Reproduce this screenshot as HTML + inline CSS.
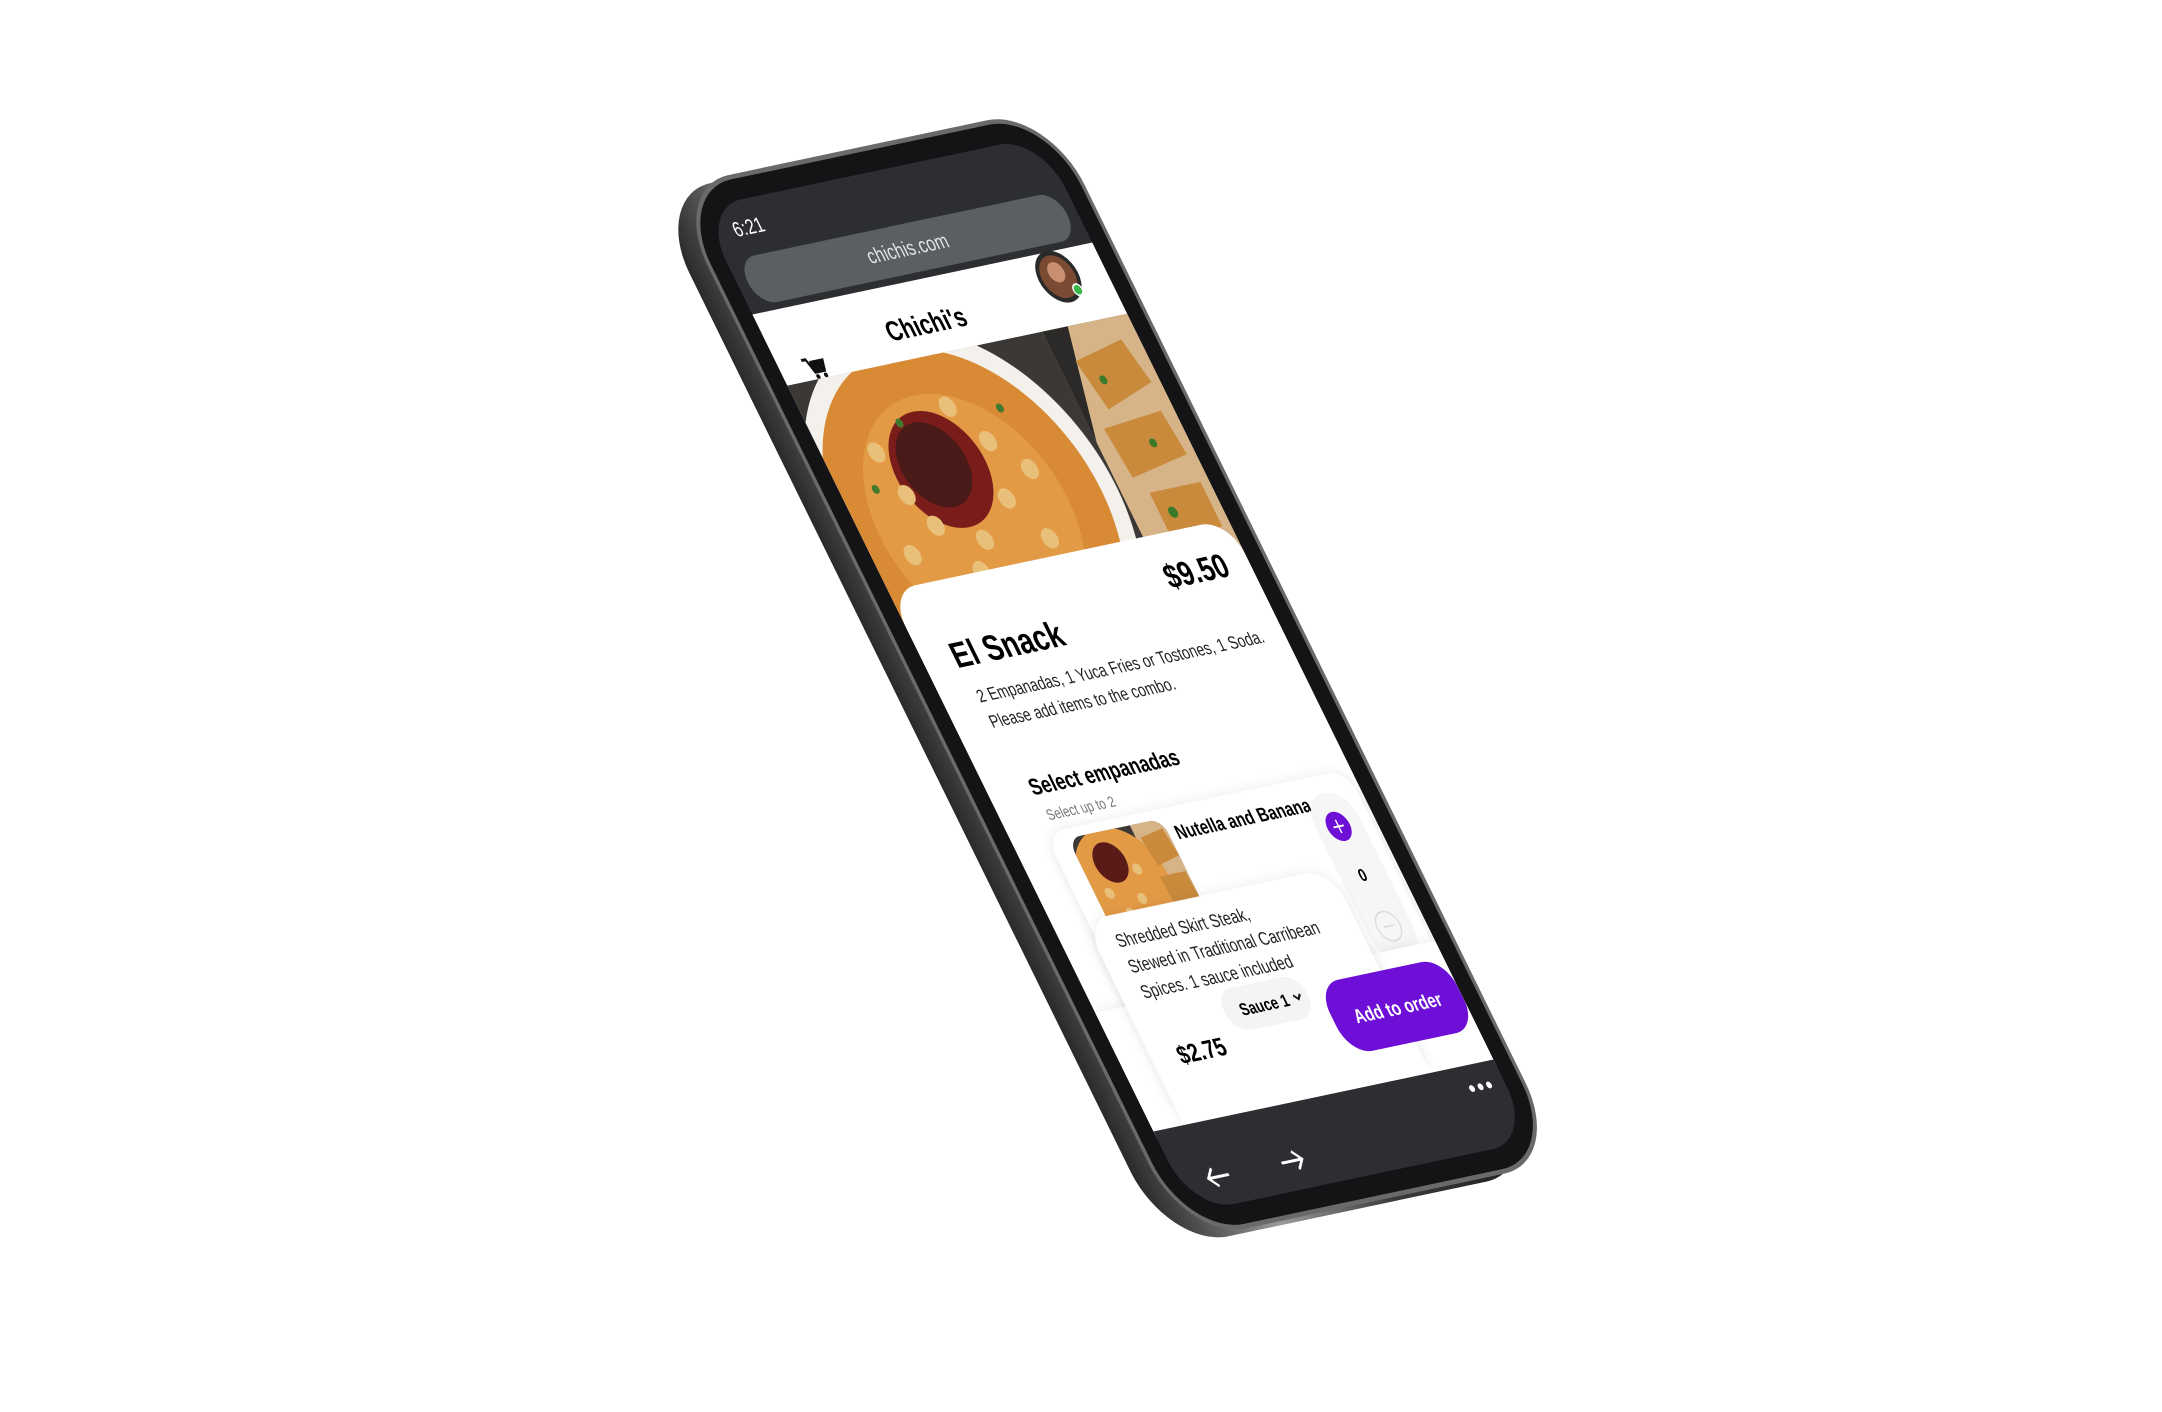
<!DOCTYPE html>
<html><head><meta charset="utf-8"><style>
html,body{margin:0;padding:0;background:#fff;width:2162px;height:1412px;overflow:hidden}
svg{display:block}
text{font-family:"Liberation Sans",sans-serif}
</style></head><body>
<svg width="2162" height="1412" viewBox="0 0 2162 1412">
<defs>
<linearGradient id="side" x1="0" y1="0" x2="1" y2="0">
<stop offset="0" stop-color="#2a2a2a"/><stop offset="0.3" stop-color="#9a9a9a"/><stop offset="0.6" stop-color="#3b3b3b"/><stop offset="1" stop-color="#1a1a1a"/>
</linearGradient>
<clipPath id="scr"><rect x="0" y="0" width="400" height="905" rx="48"/></clipPath>
<clipPath id="food"><rect x="0" y="160" width="400" height="230"/></clipPath>
<clipPath id="thumb"><rect x="62" y="578" width="110" height="85" rx="14"/></clipPath>
<filter id="sh" x="-20%" y="-20%" width="140%" height="140%"><feDropShadow dx="0" dy="2" stdDeviation="6" flood-color="#000" flood-opacity="0.12"/></filter>
</defs>
<g transform="translate(-18,8) matrix(0.85,-0.18,0.545,1.11,700,208)">
<rect x="-22" y="-22" width="444" height="949" rx="70" fill="url(#side)"/>
</g>
<g transform="matrix(0.85,-0.18,0.545,1.11,700,208)">
<rect x="-22" y="-22" width="444" height="949" rx="70" fill="#6a6a6a"/>
<rect x="-18" y="-18" width="436" height="941" rx="66" fill="#141416"/>
<g clip-path="url(#scr)">
<rect x="0" y="0" width="400" height="905" fill="#2c2e31"/>
<text x="24" y="30" fill="#fff" font-size="18">6:21</text>
<rect x="12" y="48" width="376" height="42" rx="21" fill="#5b5e62"/>
<text x="200" y="75" fill="#e4e4e4" font-size="18" text-anchor="middle">chichis.com</text>
<rect x="0" y="96" width="400" height="742" fill="#fff"/>
<circle cx="346" cy="118" r="23" fill="#2a2a2a"/>
<circle cx="346" cy="118" r="19" fill="#7a4a32"/>
<circle cx="346" cy="114" r="9" fill="#c89070"/>
<circle cx="360" cy="132" r="5" fill="#3bb54a" stroke="#fff" stroke-width="1.5"/>
<text x="180" y="142" font-size="24" font-weight="bold" text-anchor="middle">Chichi's</text>
<g transform="translate(28,140)" fill="#111">
<path d="M0 2h5l4 12h11l3-9H8" stroke="#111" stroke-width="2.5" fill="none"/>
<rect x="7" y="5" width="15" height="8"/>
<circle cx="10" cy="18" r="2.2"/><circle cx="19" cy="18" r="2.2"/>
</g>
<g clip-path="url(#food)">
<rect x="0" y="160" width="400" height="230" fill="#3b3836"/>
<rect x="300" y="160" width="120" height="230" fill="#d6b488"/>
<path d="M300 160 L330 160 L300 260 Z" fill="#2c2a29"/>
<g fill="#c98a3c">
<path d="M320 190 l60 -10 l10 40 l-60 15z"/><path d="M315 250 l70 -5 l5 40 l-70 10z"/><path d="M330 310 l60 0 l0 40 l-60 5z"/>
</g>
<g fill="#3a7a2a"><circle cx="340" cy="210" r="4"/><circle cx="360" cy="270" r="4"/><circle cx="345" cy="330" r="5"/></g>
<circle cx="130" cy="300" r="168" fill="#f4f1ec"/>
<circle cx="130" cy="300" r="150" fill="#d98a34"/>
<circle cx="130" cy="300" r="110" fill="#e39a45"/>
<circle cx="120" cy="255" r="52" fill="#7a1d1a"/>
<circle cx="115" cy="250" r="38" fill="#4a1a18"/>
<g fill="#e8c07a">
<circle cx="60" cy="230" r="9"/><circle cx="85" cy="300" r="9"/><circle cx="130" cy="320" r="9"/><circle cx="175" cy="290" r="9"/><circle cx="185" cy="240" r="9"/><circle cx="160" cy="205" r="9"/><circle cx="70" cy="270" r="9"/><circle cx="110" cy="345" r="9"/><circle cx="200" cy="330" r="9"/><circle cx="45" cy="320" r="9"/><circle cx="215" cy="270" r="9"/>
</g>
<g fill="#3f7a2d"><circle cx="100" cy="210" r="4"/><circle cx="150" cy="350" r="4"/><circle cx="215" cy="215" r="4"/><circle cx="40" cy="260" r="4"/></g>
</g>
<rect x="0" y="345" width="400" height="520" rx="32" fill="#fff"/>
<text x="375" y="392" font-size="29" font-weight="bold" text-anchor="end">$9.50</text>
<text x="34" y="420" font-size="31" font-weight="bold">El Snack</text>
<text x="40" y="452" font-size="15.5" fill="#222">2 Empanadas, 1 Yuca Fries or Tostones, 1 Soda.</text>
<text x="40" y="475" font-size="15.5" fill="#222">Please add items to the combo.</text>
<text x="48" y="537" font-size="20" font-weight="bold">Select empanadas</text>
<text x="52" y="560" font-size="13" fill="#777">Select up to 2</text>
<rect x="40" y="570" width="355" height="200" rx="22" fill="#fff" filter="url(#sh)"/>
<g clip-path="url(#thumb)">
<rect x="62" y="578" width="110" height="85" fill="#3b3836"/>
<rect x="135" y="578" width="40" height="85" fill="#d6b488"/>
<circle cx="100" cy="625" r="50" fill="#e39a45"/>
<circle cx="95" cy="605" r="18" fill="#5a1a18"/>
<g fill="#e8c07a"><circle cx="78" cy="630" r="5"/><circle cx="110" cy="640" r="5"/><circle cx="120" cy="615" r="5"/><circle cx="90" cy="650" r="5"/></g>
<path d="M140 590 l28 -4 l4 25 l-28 5z" fill="#c98a3c"/><path d="M140 625 l30 0 l2 25 l-30 3z" fill="#c98a3c"/>
</g>
<text x="180" y="598" font-size="17" font-weight="bold">Nutella and Banana</text>
<rect x="332" y="585" width="52" height="150" rx="26" fill="#f6f6f6"/>
<circle cx="357" cy="615" r="13" fill="#6d0fd6"/>
<path d="M351 615h12M357 609v12" stroke="#fff" stroke-width="1.6"/>
<text x="357" y="664" font-size="15" font-weight="bold" text-anchor="middle">0</text>
<circle cx="358" cy="705" r="13" fill="none" stroke="#ddd" stroke-width="1.5"/>
<path d="M352 705h12" stroke="#ddd" stroke-width="1.5"/>
<rect x="0" y="725" width="400" height="110" fill="#fff" filter="url(#sh)"/>
<rect x="36" y="648" width="290" height="190" rx="30" fill="#fff" filter="url(#sh)"/>
<rect x="36" y="700" width="290" height="135" fill="#fff"/>
<text x="60" y="676" font-size="16" fill="#222">Shredded Skirt Steak,</text>
<text x="60" y="699" font-size="16" fill="#222">Stewed in Traditional Carribean</text>
<text x="60" y="722" font-size="16" fill="#222">Spices. 1 sauce included</text>
<rect x="138" y="728" width="98" height="38" rx="19" fill="#f4f4f4"/>
<text x="156" y="753" font-size="15" font-weight="bold">Sauce 1</text>
<path d="M220 745l4 4 4-4" stroke="#111" stroke-width="2" fill="none"/>
<text x="66" y="782" font-size="22" font-weight="bold">$2.75</text>
<rect x="0" y="832" width="400" height="80" fill="#2c2e31"/>
<rect x="250" y="740" width="150" height="64" rx="26" fill="#6d0fd6"/>
<text x="325" y="779" font-size="17" font-weight="bold" fill="#fff" text-anchor="middle">Add to order</text>
<g fill="#fff"><circle cx="362" cy="852" r="3"/><circle cx="372" cy="852" r="3"/><circle cx="382" cy="852" r="3"/></g>
<path d="M58 880h-24M42 872l-8 8 8 8" stroke="#fff" stroke-width="2.5" fill="none"/>
<path d="M120 880h24M136 872l8 8-8 8" stroke="#fff" stroke-width="2.5" fill="none"/>
</g>
</g>
</svg>
</body></html>
